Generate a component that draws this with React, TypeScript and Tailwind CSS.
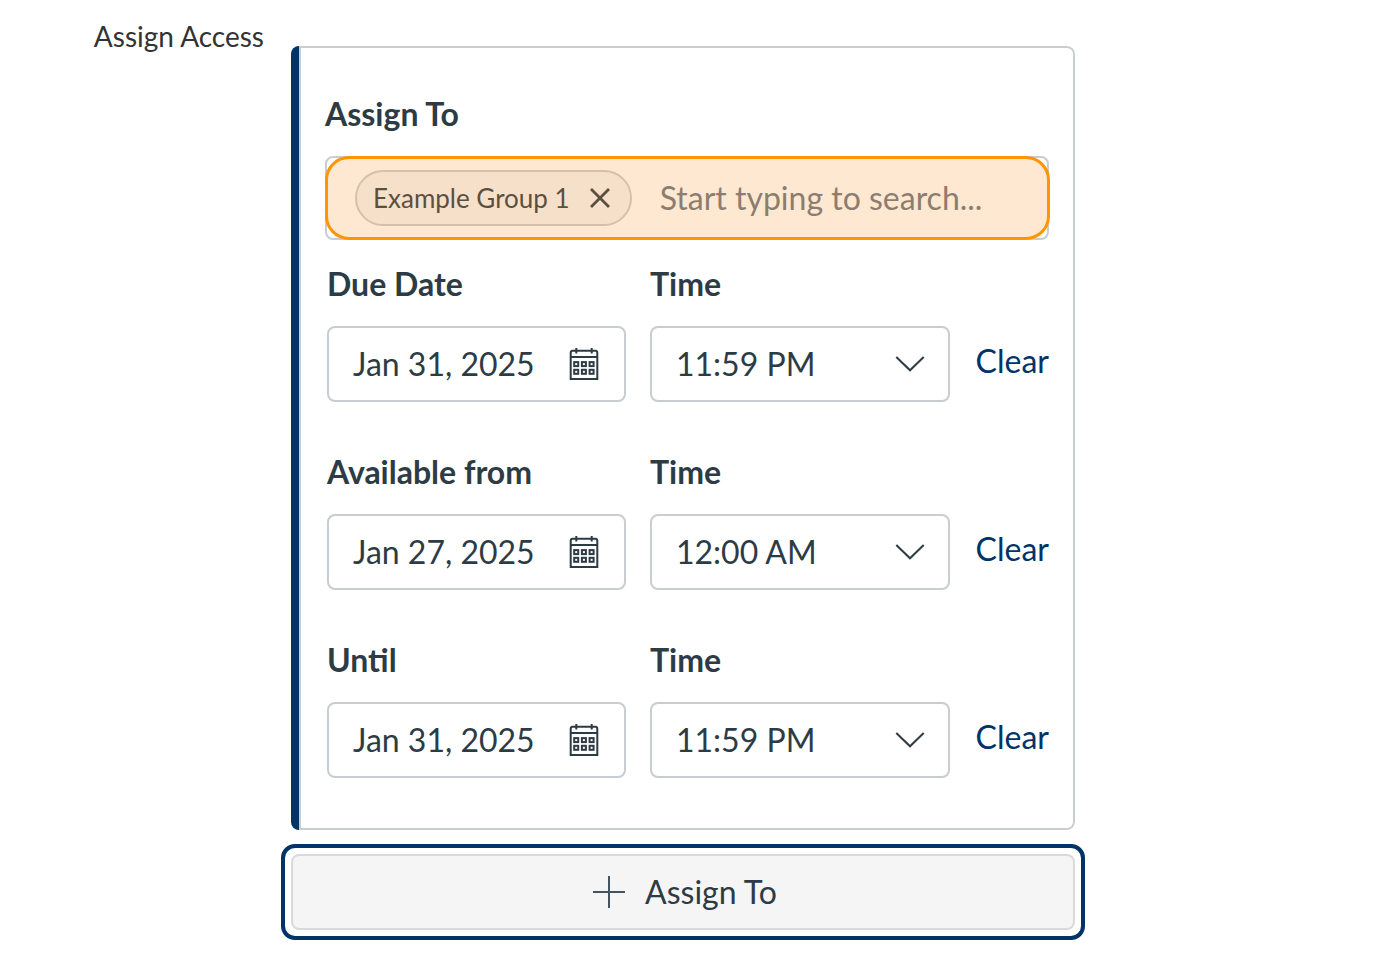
import React, { useState } from "react";

const rows = [
  { id: "due", label: "Due Date", date: "Jan 31, 2025", time: "11:59 PM" },
  { id: "from", label: "Available from", date: "Jan 27, 2025", time: "12:00 AM" },
  { id: "until", label: "Until", date: "Jan 31, 2025", time: "11:59 PM" },
];

const times = ["12:00 AM", "11:59 PM"];

function CalendarIcon() {
  return (
    <svg width="30" height="32" viewBox="0 0 30 32" fill="none" stroke="#2d3b45" strokeWidth="2">
      <path d="M1.7 31V4.7A1.9 1.9 0 0 1 3.6 2.8H26.4A1.9 1.9 0 0 1 28.3 4.7V31Z" />
      <path d="M1.7 9H28.3M7.3 0V5.6M22.7 0V5.6" />
      {[5.2, 12.9, 20.6].map((x) => (
        <React.Fragment key={x}>
          <rect x={x} y="14.1" width="4" height="4" />
          <rect x={x} y="21.8" width="4" height="4" />
        </React.Fragment>
      ))}
    </svg>
  );
}

function DateRow({ row }: { row: (typeof rows)[number] }) {
  const [date, setDate] = useState(row.date);
  const [time, setTime] = useState(row.time);

  return (
    <div className="grid grid-cols-[299fr_300fr_75px] gap-x-6 pl-0.5">
      <div className="flex min-w-0 flex-col gap-[22px]">
        <label htmlFor={`${row.id}-date`} className="font-bold">
          {row.label}
        </label>
        <div className="flex h-[76px] items-center rounded-lg border-2 border-[#c7cdd1] pr-[25px] pl-6">
          <input
            id={`${row.id}-date`}
            type="text"
            value={date}
            onChange={(e) => setDate(e.target.value)}
            className="w-full min-w-0 flex-1 bg-transparent outline-none"
          />
          <button type="button" aria-label="Choose a date" className="shrink-0">
            <CalendarIcon />
          </button>
        </div>
      </div>

      <div className="flex min-w-0 flex-col gap-[22px]">
        <label htmlFor={`${row.id}-time`} className="font-bold">
          Time
        </label>
        <div className="relative">
          <select
            id={`${row.id}-time`}
            value={time}
            onChange={(e) => setTime(e.target.value)}
            className="h-[76px] w-full appearance-none rounded-lg border-2 border-[#c7cdd1] bg-white pr-16 pl-6 outline-none"
          >
            <option value="" />
            {times.map((t) => (
              <option key={t} value={t}>
                {t}
              </option>
            ))}
          </select>
          <svg
            className="pointer-events-none absolute top-[30px] right-[25px]"
            width="30"
            height="16"
            viewBox="0 0 30 16"
            fill="none"
            stroke="#2d3b45"
            strokeWidth="2"
          >
            <path d="M1.3 1L15 14.3L28.7 1" />
          </svg>
        </div>
      </div>

      <button
        type="button"
        onClick={() => {
          setDate("");
          setTime("");
        }}
        className="h-[76px] self-end pb-1.5 text-right text-[#003366]"
      >
        Clear
      </button>
    </div>
  );
}

export default function App() {
  const [groups, setGroups] = useState(["Example Group 1"]);

  return (
    <main className="flex min-h-screen gap-[17px] bg-white font-['Lato',sans-serif] text-[32px] leading-10 text-[#2d3b45]">
      <h2 className="w-[264px] shrink-0 pt-4 text-right text-[28px] text-[#333333]">
        Assign Access
      </h2>

      <div className="flex max-w-[804px] flex-1 flex-col gap-3.5 pt-[46px]">
        <section className="mx-2.5 flex overflow-hidden rounded-lg">
          <div className="w-2 shrink-0 bg-[#003366]" />
          <div className="min-w-0 flex-1 rounded-r-lg border-2 border-[#c7cdd1] px-6 pt-[46px] pb-[50px]">
            <div className="mb-6 flex flex-col gap-[22px]">
              <label htmlFor="assign-to" className="font-bold">
                Assign To
              </label>
              <div className="relative flex h-[84px] items-center gap-7 rounded-lg border-2 border-[#c7cdd1] px-7">
                {groups.map((group) => (
                  <button
                    key={group}
                    type="button"
                    onClick={() => setGroups(groups.filter((g) => g !== group))}
                    className="flex h-14 shrink-0 items-center gap-5 rounded-full border-2 border-[#c7cdd1] bg-[#f5f5f5] pr-5 pl-4 text-[26px]"
                  >
                    {group}
                    <svg width="20" height="20" viewBox="0 0 20 20" stroke="#2d3b45" strokeWidth="2.8">
                      <path d="M1 1L19 19M19 1L1 19" />
                    </svg>
                  </button>
                ))}
                <input
                  id="assign-to"
                  type="text"
                  placeholder="Start typing to search..."
                  className="w-full min-w-0 flex-1 bg-transparent outline-none placeholder:text-[#6b7780]"
                />
                {/* highlight over the whole field */}
                <div className="pointer-events-none absolute -inset-y-0.5 -right-[3px] -left-0.5 rounded-3xl border-3 border-[#ff9500] bg-[#ff9830]/22" />
              </div>
            </div>

            <div className="flex flex-col gap-[50px]">
              {rows.map((row) => (
                <DateRow key={row.id} row={row} />
              ))}
            </div>
          </div>
        </section>

        <div className="rounded-[14px] border-4 border-[#003366] p-1.5">
          <button
            type="button"
            className="flex h-[76px] w-full items-center justify-center gap-5 rounded-lg border-2 border-[#d9d9d9] bg-[#f5f5f5] pl-1"
          >
            <svg width="32" height="32" viewBox="0 0 32 32" stroke="#43535f" strokeWidth="2">
              <path d="M16 0V32M0 16H32" />
            </svg>
            Assign To
          </button>
        </div>
      </div>
    </main>
  );
}
